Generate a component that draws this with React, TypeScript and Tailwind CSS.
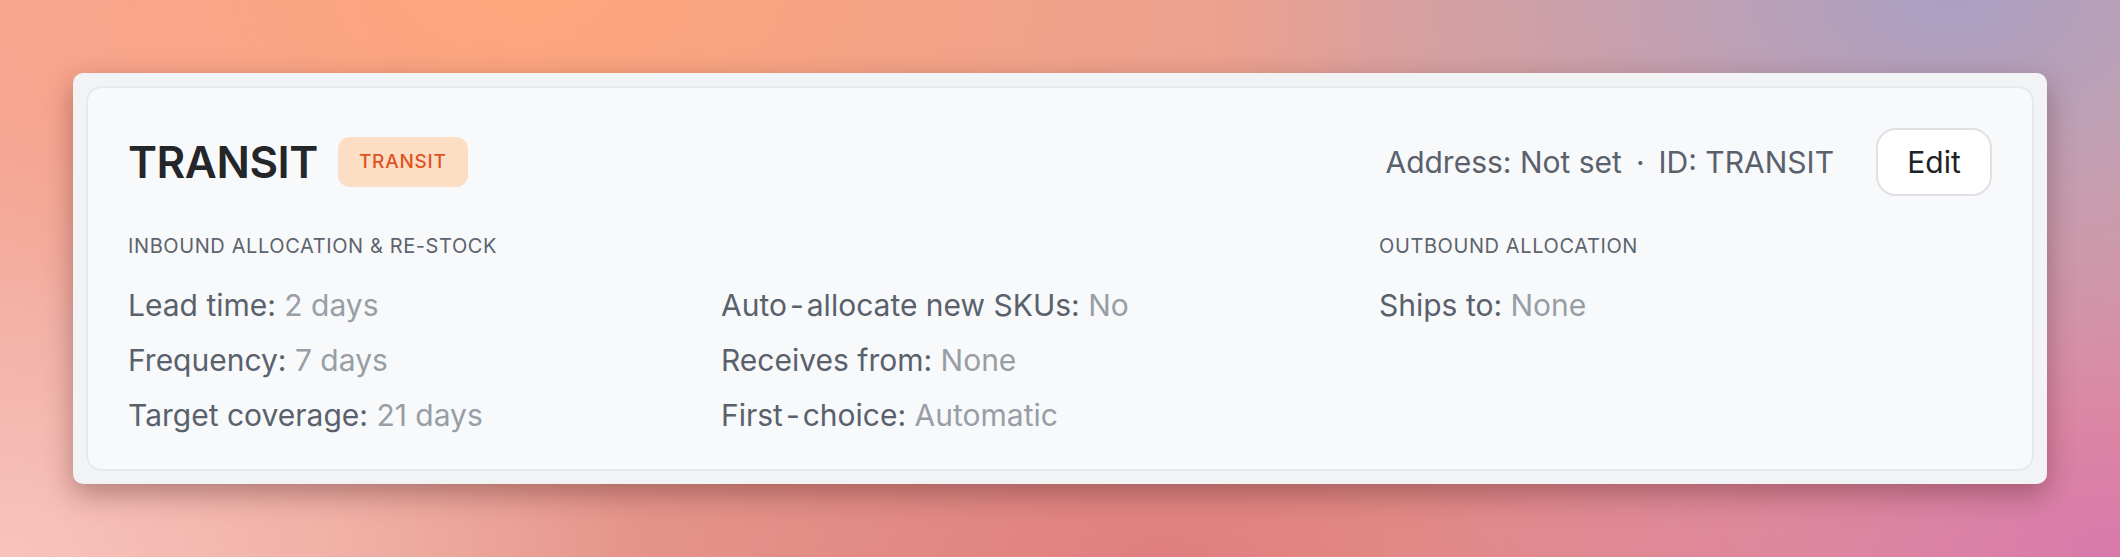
import React from "react";

function Hy() {
  return <span className="mx-[3px]">-</span>;
}

function Row({ label, value }: { label: React.ReactNode; value: string }) {
  return (
    <div className="text-[30px] leading-[40px] whitespace-nowrap">
      <span className="text-[#58616c]">{label}</span>{" "}
      <span className="text-[#979ea6]">{value}</span>
    </div>
  );
}

export default function App() {
  return (
    <div className="w-[2120px] h-[557px] p-[73px] font-[Inter,'Noto_Sans',sans-serif] bg-[#e9a092] bg-[radial-gradient(ellipse_40%_70%_at_25%_0%,#fea57c_0%,transparent_100%),radial-gradient(ellipse_35%_80%_at_92%_0%,#aaa0c4_0%,transparent_100%),radial-gradient(ellipse_30%_80%_at_0%_100%,#f9c4bd_0%,transparent_100%),radial-gradient(ellipse_35%_80%_at_100%_100%,#d879ab_0%,transparent_100%),radial-gradient(ellipse_40%_60%_at_55%_100%,#df7f7f_0%,transparent_100%),radial-gradient(ellipse_30%_70%_at_0%_10%,#f6a69b_0%,transparent_100%)]">
      <div className="h-full rounded-[10px] bg-[#f2f3f5] p-[13px] shadow-[0_10px_28px_rgba(70,25,30,0.38)]">
        <div className="h-full rounded-[16px] border-2 border-[#e7e9ec] bg-[#f8f9fb] px-[40px] pt-[40px]">
          <div className="flex h-[68px] items-center justify-between">
            <div className="flex items-center gap-[20px]">
              <h1 className="text-[44px] font-semibold leading-none tracking-[-0.01em] text-[#242629]">
                TRANSIT
              </h1>
              <span className="flex h-[50px] items-center rounded-[12px] bg-[#fcdec4] px-[21px] text-[19px] font-medium tracking-[0.04em] text-[#e0531f]">
                TRANSIT
              </span>
            </div>
            <div className="flex items-center">
              <div className="flex items-center gap-[14px] text-[30px] text-[#58616c]">
                <span>Address: Not set</span>
                <span>·</span>
                <span>ID: TRANSIT</span>
              </div>
              <button className="ml-[42px] flex h-[68px] w-[116px] items-center justify-center rounded-[20px] border-2 border-[#dfe1e4] bg-white text-[30px] text-[#202225]">
                Edit
              </button>
            </div>
          </div>

          <div className="mt-[36px] grid grid-cols-[593px_658px_1fr]">
            <div className="col-span-2 text-[20px] leading-[28px] tracking-[0.03em] text-[#5c646e]">
              INBOUND ALLOCATION &amp; RE-STOCK
            </div>
            <div className="text-[20px] leading-[28px] tracking-[0.03em] text-[#5c646e]">
              OUTBOUND ALLOCATION
            </div>

            <div className="mt-[25px] flex flex-col gap-[15px]">
              <Row label="Lead time:" value="2 days" />
              <Row label="Frequency:" value="7 days" />
              <Row label="Target coverage:" value="21 days" />
            </div>
            <div className="mt-[25px] flex flex-col gap-[15px]">
              <Row label={<>Auto<Hy />allocate new SKUs:</>} value="No" />
              <Row label="Receives from:" value="None" />
              <Row label={<>First<Hy />choice:</>} value="Automatic" />
            </div>
            <div className="mt-[25px] flex flex-col gap-[15px]">
              <Row label="Ships to:" value="None" />
            </div>
          </div>
        </div>
      </div>
    </div>
  );
}
